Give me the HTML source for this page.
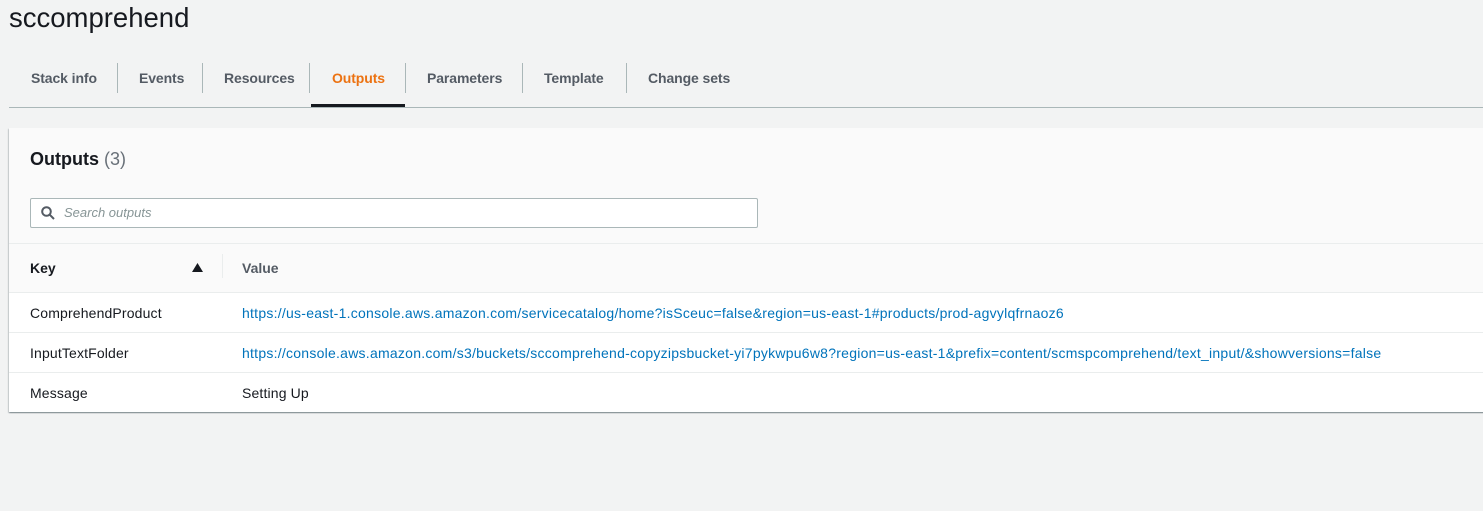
<!DOCTYPE html>
<html><head><style>
body{margin:0;background:#f2f3f3;font-family:"Liberation Sans",sans-serif;width:1483px;height:511px;overflow:hidden;position:relative;color:#16191f}
.abs{position:absolute}
h1{position:absolute;left:9px;top:2px;margin:0;font-size:27.5px;font-weight:normal;color:#16191f}
.tab{position:absolute;top:70px;font-size:14px;font-weight:bold;color:#545b64;letter-spacing:-0.1px}
.sep{position:absolute;top:63px;width:1px;height:30px;background:#aab7b8}
.panel{position:absolute;left:9px;top:128px;width:1480px;height:284px;background:#fff;box-shadow:0 1px 1px rgba(0,28,36,.3),1px 1px 1px rgba(0,28,36,.15),-1px 1px 1px rgba(0,28,36,.15)}
.row{position:absolute;left:0;width:100%;height:40px;border-top:1px solid #eaeded;font-size:14px}
.row span{position:absolute;top:12px;letter-spacing:0.15px}
a{color:#0073bb;text-decoration:none;letter-spacing:0.25px}
</style></head><body>
<h1>sccomprehend</h1>
<div class="tab" style="left:31px">Stack info</div>
<div class="sep" style="left:117px"></div>
<div class="tab" style="left:139px">Events</div>
<div class="sep" style="left:202px"></div>
<div class="tab" style="left:224px">Resources</div>
<div class="sep" style="left:309px"></div>
<div class="tab" style="left:332px;color:#ec7211">Outputs</div>
<div class="sep" style="left:405px"></div>
<div class="tab" style="left:427px">Parameters</div>
<div class="sep" style="left:522px"></div>
<div class="tab" style="left:544px">Template</div>
<div class="sep" style="left:626px"></div>
<div class="tab" style="left:648px">Change sets</div>
<div class="abs" style="left:9px;top:107px;width:1474px;height:1px;background:#aab7b8"></div>
<div class="abs" style="left:311px;top:104px;width:94px;height:3px;background:#16191f"></div>
<div class="panel">
 <div class="abs" style="left:0;top:0;width:100%;height:164px;background:#fafafa"></div>
 <div class="abs" style="left:21px;top:21px;font-size:18px;font-weight:bold">Outputs <span style="font-weight:normal;color:#687078">(3)</span></div>
 <div class="abs" style="left:21px;top:70px;width:726px;height:28px;border:1px solid #aab7b8;border-radius:2px;background:#fff">
  <svg class="abs" style="left:10px;top:7px" width="14" height="14" viewBox="0 0 14 14"><circle cx="5.5" cy="5.5" r="4.3" fill="none" stroke="#545b64" stroke-width="2"/><path d="M8.7 8.7L13 13" stroke="#545b64" stroke-width="2"/></svg>
  <span class="abs" style="left:33px;top:6px;font-size:13px;font-style:italic;color:#879596">Search outputs</span>
 </div>
 <div class="abs" style="left:0;top:115px;width:100%;height:1px;background:#eaeded"></div>
 <div class="abs" style="left:21px;top:132px;font-size:14px;font-weight:bold">Key</div>
 <svg class="abs" style="left:183px;top:135px" width="11" height="9"><path d="M0 9L5.5 0L11 9Z" fill="#16191f"/></svg>
 <div class="abs" style="left:213px;top:126px;width:1px;height:24px;background:#eaeded"></div>
 <div class="abs" style="left:233px;top:132px;font-size:14px;font-weight:bold;color:#545b64">Value</div>
 <div class="row" style="top:164px"><span style="left:21px">ComprehendProduct</span><span style="left:233px"><a>https://us-east-1.console.aws.amazon.com/servicecatalog/home?isSceuc=false&amp;region=us-east-1#products/prod-agvylqfrnaoz6</a></span></div>
 <div class="row" style="top:204px"><span style="left:21px">InputTextFolder</span><span style="left:233px"><a>https://console.aws.amazon.com/s3/buckets/sccomprehend-copyzipsbucket-yi7pykwpu6w8?region=us-east-1&amp;prefix=content/scmspcomprehend/text_input/&amp;showversions=false</a></span></div>
 <div class="row" style="top:244px"><span style="left:21px">Message</span><span style="left:233px">Setting Up</span></div>
</div>
</body></html>
